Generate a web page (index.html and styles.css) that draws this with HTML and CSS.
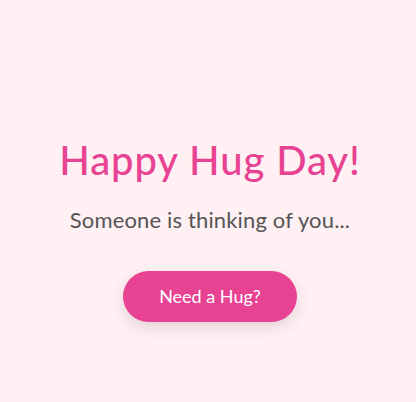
FILE: index.html
```html
<!DOCTYPE html>
<html lang="en">
<head>
<meta charset="utf-8">
<title>Happy Hug Day</title>
<link rel="stylesheet" href="styles.css">
</head>
<body>
<main class="card">
  <h1 class="title">Happy Hug Day!</h1>
  <p class="subtitle">Someone is thinking of you...</p>
  <button class="hug-btn" type="button">Need a Hug?</button>
</main>
</body>
</html>
```
FILE: styles.css
```css
html, body {
  margin: 0;
  padding: 0;
  height: 100%;
}
body {
  background: #fff0f3;
  font-family: "Lato", "Noto Sans", sans-serif;
  box-sizing: border-box;
  padding-top: 136px;
  padding-left: 4px;
}
.card {
  display: flex;
  flex-direction: column;
  align-items: center;
  text-align: center;
}
.title {
  margin: 0;
  font-size: 40px;
  font-weight: 500;
  color: #e84393;
  line-height: 48px;
  letter-spacing: 0.9px;
}
.subtitle {
  margin: 22px 0 0;
  font-size: 22px;
  color: #555555;
  font-weight: 400;
  line-height: 28.6px;
  letter-spacing: 0.15px;
}
.hug-btn {
  margin-top: 36px;
  font-family: inherit;
  font-size: 18px;
  color: #ffffff;
  background: #e84393;
  border: none;
  border-radius: 26px;
  width: 174px;
  height: 51px;
  padding: 0;
  box-shadow: 0 5px 15px rgba(0, 0, 0, 0.12);
  cursor: pointer;
}
```
